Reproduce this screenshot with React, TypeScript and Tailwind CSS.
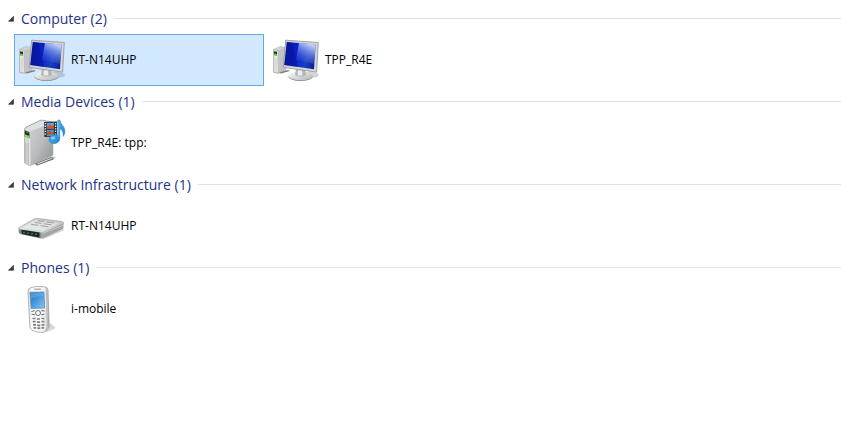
import { useState } from "react";
import type { ReactNode } from "react";

type Device = {
  id: string;
  name: string;
  icon: ReactNode;
};

type DeviceGroup = {
  title: string;
  devices: Device[];
};

function ComputerIcon({ id }: { id: string }) {
  return (
    <svg className="size-12 shrink-0" viewBox="0 0 48 48" aria-hidden="true">
      <defs>
        <linearGradient id={`${id}-screen`} x1="0" y1="0.3" x2="1" y2="0.6">
          <stop offset="0" stopColor="#0a1cae" />
          <stop offset="0.42" stopColor="#0a22cc" />
          <stop offset="0.75" stopColor="#1c3fc4" />
          <stop offset="1" stopColor="#0d2496" />
        </linearGradient>
        <linearGradient id={`${id}-shine`} x1="0.8" y1="0" x2="0.4" y2="1">
          <stop offset="0" stopColor="#e4edff" stopOpacity="0.95" />
          <stop offset="1" stopColor="#4a6fe8" stopOpacity="0.1" />
        </linearGradient>
        <linearGradient id={`${id}-base`} x1="0" y1="0" x2="1" y2="1">
          <stop offset="0" stopColor="#fafafa" />
          <stop offset="1" stopColor="#b4b6b8" />
        </linearGradient>
      </defs>
      <ellipse cx="38" cy="39" rx="9" ry="3" fill="#5d7388" opacity="0.3" />
      {/* tower */}
      <path d="M1.5 13.5 8 10.5l6 1v23l-7.5 3-5-1z" fill="#d2d3d3" stroke="#a6a8aa" strokeWidth="0.5" />
      <path d="M1.5 13.5 6 14.5 6.5 37l-5-1z" fill="#e6e6e5" stroke="#9a9c9e" strokeWidth="0.5" />
      <path d="M6 14.5 14 11.5v23L6.5 37z" fill="#c0c2c3" />
      <path d="M2 15.2l3 .6v3.8L2 19z" fill="#2b302b" />
      <path d="M2.2 17.6l2.6.5v2l-2.6-.5z" fill="#62dc2b" />
      <path d="M7 36.500 16 34l2 1-9 2.600z" fill="#7d8083" />
      <path d="M3 22v13M4.5 22v13.5" stroke="#c0c2c3" strokeWidth="0.5" />
      {/* stand */}
      <ellipse cx="28.5" cy="40.8" rx="12" ry="4.2" fill="#85898d" />
      <ellipse cx="28.5" cy="40" rx="12" ry="4.2" fill={`url(#${id}-base)`} />
      <path d="M24 33h9l1 6c-3 2-8 2-11 0z" fill="#b3b6b8" />
      <path d="M26 34h4l.5 5.5h-5z" fill="#ececec" />
      {/* monitor */}
      <path d="M13.7 4.2 46.3 6.5 44.6 36.2 11.4 31.4z" fill="#d3d5d7" stroke="#8f9397" strokeWidth="0.8" />
      <path d="M14.8 6 43.6 8.6 42 33.2 12.3 29z" fill={`url(#${id}-screen)`} />
      <path d="M27 7.1 43.6 8.6 42.3 28 24 24z" fill={`url(#${id}-shine)`} />
      <path d="M14.8 6 20 6.5 26 31 12.3 29z" fill="#04107e" opacity="0.4" />
    </svg>
  );
}

function MediaIcon() {
  return (
    <svg className="size-12 shrink-0" viewBox="0 0 48 48" aria-hidden="true">
      <defs>
        <linearGradient id="media-side" x1="0" y1="0" x2="1" y2="1">
          <stop offset="0" stopColor="#cfd0d1" />
          <stop offset="0.5" stopColor="#b9bbbc" />
          <stop offset="1" stopColor="#8b8e90" />
        </linearGradient>
        <linearGradient id="media-note" x1="0" y1="0" x2="1" y2="1">
          <stop offset="0" stopColor="#62c0f4" />
          <stop offset="1" stopColor="#157bc9" />
        </linearGradient>
      </defs>
      <path d="M15 45.5 34 37l5 1.5L20 46.5z" fill="#a9abad" opacity="0.5" />
      <path d="M17 44.5 33 38l2.500 1v1.500L19 46.500z" fill="#6f7375" />
      <path d="M19 44.5 33 39l1.500.600L20 45.300z" fill="#d6d8d9" />
      <path d="M6.500 10.500q0-1.500 1.500-2.200L22 1.500q1-.5 2-.3l9.500 1.600q1.300.3 1.300 1.600V36L12 46.500l-4.200-1.700q-1.300-.6-1.300-2z" fill="#dfe0e1" stroke="#8e9193" strokeWidth="0.8" />
      <path d="M11.500 12.500 34.800 4v32L12 46.500z" fill="url(#media-side)" />
      <path d="M6.600 10.500 11.500 12.500 12 46.500l-4-1.700q-1.400-.6-1.400-2z" fill="#d5d6d7" />
      <path d="M11.700 12.700 12 46" stroke="#f3f3f3" strokeWidth="0.7" />
      <path d="M7.500 24v20M9 24v20.500M10.500 24v21" stroke="#aaacad" strokeWidth="0.5" />
      <path d="M6.800 11.300l4.700 1.900v6L6.800 17.300z" fill="#252a28" />
      <path d="M6.800 15.200l4.700 1.800v2.200l-4.700-1.800z" fill="#7de23a" />
      <path d="M8 12.800l2.500 1" stroke="#b7c4b9" strokeWidth="0.6" />
      {/* film strip */}
      <path d="M26 3 39 2.600V17.500L26.400 17.900z" fill="#28303a" />
      <path d="M28.800 3.800h7.200v5.800h-7.200z" fill="#58a9df" />
      <path d="M28.800 8 32 5.500 34 7l2-1v3.600h-7.200z" fill="#d75528" />
      <path d="M28.800 10.800h7.200v6.200h-7.200z" fill="#4e93cc" />
      <path d="M28.800 14 31 12l3 1.500 2-1V15l-7.200 1z" fill="#c94b24" />
      <path d="M27.400 4v13M37.600 4v13" stroke="#edf1f4" strokeWidth="1.3" strokeDasharray="1.3 1.3" />
      {/* music note */}
      <path d="M39.800 1.200h2.200c.3 4 4.900 6 4.900 11 0 2-.7 3.800-1.800 5.200.5-4.400-.9-6.400-3.300-7.800v9.800c0 3.200-2.700 5.100-5.800 5.100-2.900 0-4.900-1.400-4.900-3.700 0-2.800 3-5 6-5 1 0 2 .2 2.700.5z" fill="url(#media-note)" stroke="#1475bd" strokeWidth="0.5" />
      <ellipse cx="35" cy="19" rx="2.200" ry="1.400" fill="#a9e0ff" opacity="0.7" />
      <path d="M40.700 3v15" stroke="#9ddaff" strokeWidth="0.6" />
    </svg>
  );
}

function RouterIcon() {
  return (
    <svg className="size-12 shrink-0" viewBox="0 0 48 48" aria-hidden="true">
      <defs>
        <linearGradient id="router-top" x1="0" y1="1" x2="1" y2="0">
          <stop offset="0" stopColor="#e4e5e5" />
          <stop offset="1" stopColor="#bcbec0" />
        </linearGradient>
      </defs>
      <path d="M22 36 45 27.500l1.500.500L26 37z" fill="#969899" opacity="0.4" />
      <path d="M.5 26.500 23 30v6.500L3 32.300q-2-.5-2.200-2z" fill="#84888a" />
      <path d="M23 30 45.500 21.500v4.200q0 1.200-1.200 1.700L25.500 36q-1 .5-2.500.5z" fill="#a1a5a7" />
      <path d="M.8 25.800 16 17q1.500-.9 3.200-.7l24.500 3.200q2.800.5 1.600 2.300L26 30.300q-1.600.7-3.500.4L2 27.500q-1.800-.4-1.200-1.700z" fill="url(#router-top)" stroke="#999c9e" strokeWidth="0.6" />
      <path d="M3 26 17.500 18l24 3L24.500 28.800z" fill="#efefef" opacity="0.6" />
      <path d="M20 18.700l6 .8M29 20l7 .9M17 20.500l6 .8M26 21.800l7 .9M13.500 22.400l6.500.9M23 23.700l7 1" stroke="#9da0a2" strokeWidth="1" strokeLinecap="round" />
      <path d="M3.500 27.800 21.500 30.600v4.800L5 32.200q-1.300-.4-1.500-1.600z" fill="#1d2623" />
      <path d="M6 29.700v1.500M10 30.300v1.500M14 31v1.500M18 31.600v1.500" stroke="#42c18b" strokeWidth="1.100" />
      <path d="M24 31.500 44.500 23.500" stroke="#d8dadb" strokeWidth="0.7" />
    </svg>
  );
}

function PhoneIcon() {
  return (
    <svg className="size-12 shrink-0" viewBox="0 0 48 48" aria-hidden="true">
      <defs>
        <linearGradient id="phone-body" x1="0" y1="0" x2="1" y2="0">
          <stop offset="0" stopColor="#d8dadb" />
          <stop offset="0.2" stopColor="#fcfcfc" />
          <stop offset="0.8" stopColor="#f0f0f1" />
          <stop offset="1" stopColor="#a3a6a9" />
        </linearGradient>
        <linearGradient id="phone-screen" x1="0" y1="0" x2="1" y2="1">
          <stop offset="0" stopColor="#1c68ba" />
          <stop offset="0.5" stopColor="#479be2" />
          <stop offset="1" stopColor="#8bc9f5" />
        </linearGradient>
      </defs>
      <path d="M27 46 32 38l5 4q1 1-.5 1.800L29 47z" fill="#999c9f" opacity="0.4" />
      <path d="M13 2.500Q19 .5 27 1.800q2.800.5 3 3.200l1.200 34.500q0 3-1.700 5-1.500 2-4.200 3Q18 47.500 14 45.300q-2-1.100-2.200-4L10 6.500q-.2-3 3-4z" fill="url(#phone-body)" stroke="#96999c" strokeWidth="0.7" />
      <path d="M28.300 3.500 29.500 40q0 3-3 6.300" stroke="#b3b5b8" strokeWidth="0.7" fill="none" />
      <path d="M16.500 4.200h6" stroke="#7e8285" strokeWidth="0.9" strokeLinecap="round" />
      <path d="M12 7.300 26 7l.6 16-13.500.5z" fill="url(#phone-screen)" stroke="#5b7f9e" strokeWidth="0.7" />
      <path d="M12.400 7.700 25.600 7.400 25.800 11Q18 11 12.700 14z" fill="#81c0f0" opacity="0.4" />
      <circle cx="20" cy="28" r="2.500" fill="#f8f8f8" stroke="#5f6366" strokeWidth="0.9" />
      <path d="M13.800 26.300l2.500-.5M23.700 25.700l2.500.2M14 29.200l2.500.6M23.700 29.800l2.500-.6" stroke="#5f6366" strokeWidth="1" strokeLinecap="round" />
      <path d="M14.500 33.500h3M19 34h3M23.500 33.500h3M14.700 36.700h3M19 37.200h3M23.500 36.700h3M15 39.900h3M19.200 40.400h3M23.500 39.900h3M15.500 42.800h2.600M19.400 43.200h2.800M23.500 42.800h2.600" stroke="#7c8083" strokeWidth="1.700" />
    </svg>
  );
}

const GROUPS: DeviceGroup[] = [
  {
    title: "Computer",
    devices: [
      { id: "pc-rt", name: "RT-N14UHP", icon: <ComputerIcon id="pc-rt" /> },
      { id: "pc-tpp", name: "TPP_R4E", icon: <ComputerIcon id="pc-tpp" /> },
    ],
  },
  {
    title: "Media Devices",
    devices: [{ id: "media-tpp", name: "TPP_R4E: tpp:", icon: <MediaIcon /> }],
  },
  {
    title: "Network Infrastructure",
    devices: [{ id: "router-rt", name: "RT-N14UHP", icon: <RouterIcon /> }],
  },
  {
    title: "Phones",
    devices: [{ id: "phone", name: "i-mobile", icon: <PhoneIcon /> }],
  },
];

export default function App() {
  const [selected, setSelected] = useState("pc-rt");
  const [collapsed, setCollapsed] = useState<string[]>([]);

  const toggleGroup = (title: string) => {
    setCollapsed((current) =>
      current.includes(title)
        ? current.filter((item) => item !== title)
        : [...current, title],
    );
  };

  return (
    <main className="min-h-screen bg-white pt-[3px] pr-[7px] pl-2 font-['Open_Sans','Noto_Sans',sans-serif]">
      {GROUPS.map((group) => {
        const isOpen = !collapsed.includes(group.title);

        return (
          <section key={group.title}>
            <h2 className="flex h-[31px] items-center gap-[7px]">
              <button
                type="button"
                aria-expanded={isOpen}
                onClick={() => toggleGroup(group.title)}
                className="flex items-center gap-[7px] text-sm text-[#1e3287]"
              >
                <svg
                  className={isOpen ? "size-1.5" : "size-1.5 -rotate-45"}
                  viewBox="0 0 6 6"
                  aria-hidden="true"
                >
                  <path d="M.5 5.300 5.500.300V5.300z" fill="#404040" stroke="#262626" strokeWidth="0.600" />
                </svg>
                {group.title} ({group.devices.length})
              </button>
              <span className="h-px flex-1 bg-[#e2e2e2]" />
            </h2>

            {isOpen && (
              <ul className="flex flex-wrap gap-x-1 pl-1.5">
                {group.devices.map((device) => (
                  <li key={device.id}>
                    <button
                      type="button"
                      aria-pressed={selected === device.id}
                      onClick={() => setSelected(device.id)}
                      className={`flex h-[52px] w-[250px] items-center gap-[5px] border px-[3px] text-left text-xs text-black ${
                        selected === device.id
                          ? "border-[#66a7e8] bg-[#d1e8ff]"
                          : "border-transparent"
                      }`}
                    >
                      {device.icon}
                      <span>{device.name}</span>
                    </button>
                  </li>
                ))}
              </ul>
            )}
          </section>
        );
      })}
    </main>
  );
}
